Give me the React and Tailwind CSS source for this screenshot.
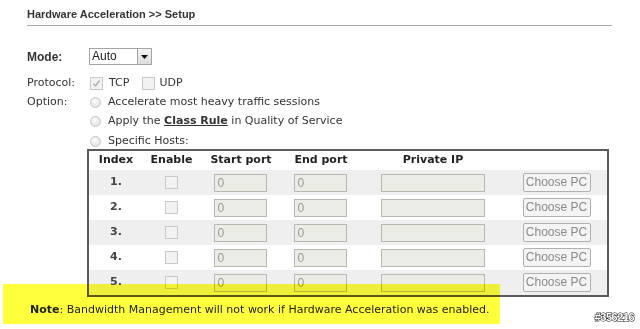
import React from 'react';

const verdana = { fontFamily: '"DejaVu Sans", Verdana, sans-serif' };

const Radio = () => (
  <span className="inline-block w-[11px] h-[11px] rounded-full border border-[#c4c4c4] bg-[radial-gradient(circle_at_40%_35%,#fbfbfb,#dcdcdc)]" />
);

const Box = ({ checked, className = '' }) => (
  <span className={`inline-flex items-center justify-center w-[13px] h-[13px] border border-[#c8c8c8] bg-[#f2f2f2] ${className}`}>
    {checked && (
      <svg width="9" height="9" viewBox="0 0 9 9">
        <path d="M1.5 4.8 L3.6 7 L7.6 1.5" stroke="#b0b0b0" strokeWidth="1.4" fill="none" />
      </svg>
    )}
  </span>
);

const Field = ({ w, value }) => (
  <div
    className={`${w} h-[18px] border border-[#b8b8b0] bg-[#ecece6] text-[12px] text-[#999] pl-[3px] leading-[16px]`}
    style={{ fontFamily: '"Liberation Sans", Arial, sans-serif' }}
  >
    {value}
  </div>
);

const rows = [1, 2, 3, 4, 5];

export default function App() {
  return (
    <div className="relative w-[640px] h-[329px] bg-white overflow-hidden text-[#333]" style={verdana}>
      <div
        className="ml-[27px] mr-[28px] h-[26px] pt-[6px] border-b border-[#a8a8a8] text-[11px] font-bold text-[#333]"
        style={{ fontFamily: '"Liberation Sans", Arial, sans-serif' }}
      >
        Hardware Acceleration &gt;&gt; Setup
      </div>

      <div className="pl-[27px]">
        <div className="mt-[22px] flex items-center h-[17px]">
          <div
            className="w-[62px] text-[12px] font-bold"
            style={{ fontFamily: '"Liberation Sans", Arial, sans-serif' }}
          >
            Mode:
          </div>
          <div className="flex w-[63px] h-[17px] border border-[#a5a5a5] bg-white">
            <div
              className="flex-1 text-[12px] leading-[15px] pl-[2px] text-[#222]"
              style={{ fontFamily: '"Liberation Sans", Arial, sans-serif' }}
            >
              Auto
            </div>
            <div className="w-[14px] h-[15px] border-l border-[#a5a5a5] bg-[linear-gradient(#f4f4f4,#dcdcdc)] flex items-center justify-center">
              <svg width="7" height="4" viewBox="0 0 7 4">
                <path d="M0 0 H7 L3.5 4 Z" fill="#111" />
              </svg>
            </div>
          </div>
        </div>

        <div className="mt-[11px] flex items-center h-[14px] text-[11px]">
          <div className="w-[63px]">Protocol:</div>
          <Box checked />
          <span className="ml-[6px]">TCP</span>
          <Box className="ml-[13px]" />
          <span className="ml-[4px]">UDP</span>
        </div>

        <div className="mt-[5px] flex items-center h-[14px] text-[11px]">
          <div className="w-[63px]">Option:</div>
          <Radio />
          <span className="ml-[7px]">Accelerate most heavy traffic sessions</span>
        </div>
        <div className="mt-[5px] flex items-center h-[14px] text-[11px]">
          <div className="w-[63px]" />
          <Radio />
          <span className="ml-[7px]">
            Apply the <span className="font-bold underline">Class Rule</span> in Quality of Service
          </span>
        </div>
        <div className="mt-[6px] flex items-center h-[14px] text-[11px]">
          <div className="w-[63px]" />
          <Radio />
          <span className="ml-[7px]">Specific Hosts:</span>
        </div>
      </div>

      <div className="ml-[87px] mt-[1px] w-[522px] border-2 border-[#5a5a5a] text-[11px]">
        <div className="grid grid-cols-[54px_57px_82px_78px_146px_1fr] h-[19px] items-center font-bold text-center text-[#222]">
          <div>Index</div>
          <div>Enable</div>
          <div>Start port</div>
          <div>End port</div>
          <div>Private IP</div>
          <div />
        </div>
        {rows.map((n) => (
          <div
            key={n}
            className={`grid grid-cols-[54px_57px_82px_78px_146px_1fr] h-[25px] items-center ${n % 2 ? 'bg-[#efefef]' : 'bg-white'}`}
          >
            <div className="text-center font-bold text-[#444]">{n}.</div>
            <div className="flex justify-center"><Box /></div>
            <div className="flex justify-center pr-[2px]"><Field w="w-[53px]" value="0" /></div>
            <div className="flex justify-center pr-[2px]"><Field w="w-[53px]" value="0" /></div>
            <div className="flex justify-center"><Field w="w-[104px]" value="" /></div>
            <div className="flex justify-center">
              <div
                className="w-[68px] h-[19px] border border-[#b0b0b0] rounded-[2px] bg-[#f4f4f4] text-[12px] leading-[17px] text-center text-[#8a8a8a]"
                style={{ fontFamily: '"Liberation Sans", Arial, sans-serif' }}
              >
                Choose PC
              </div>
            </div>
          </div>
        ))}
      </div>

      <div className="pl-[30px] mt-[5px] text-[11px] text-[#222]">
        <span className="font-bold">Note</span>: Bandwidth Management will not work if Hardware Acceleration was enabled.
      </div>

      <div className="absolute left-[3px] top-[284px] w-[497px] h-[40px] bg-[#ffff3c] mix-blend-multiply pointer-events-none" />

      <div
        className="absolute right-[6px] bottom-[4px] text-[11px] font-bold text-white tracking-[-0.5px] [-webkit-text-stroke:1px_#111] [paint-order:stroke_fill]"
        style={{ fontFamily: '"Liberation Sans", Arial, sans-serif' }}
      >
        #356216
      </div>
    </div>
  );
}
